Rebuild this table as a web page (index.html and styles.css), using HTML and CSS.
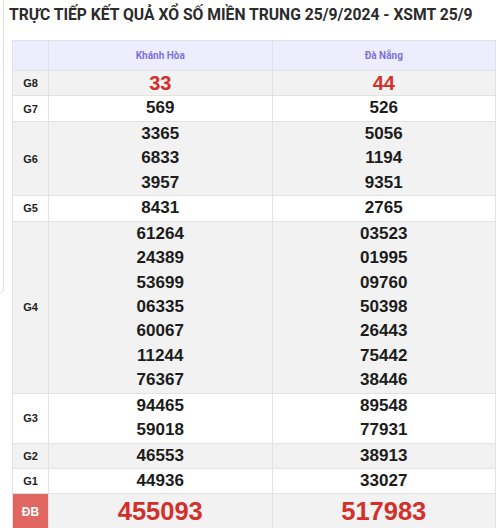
FILE: index.html
```html
<!DOCTYPE html>
<html lang="vi">
<head>
<meta charset="utf-8">
<title>XSMT 25/9</title>
<link rel="stylesheet" href="styles.css">
</head>
<body>
<div class="edge"></div>
<h1 class="title">TRỰC TIẾP KẾT QUẢ XỔ SỐ MIỀN TRUNG 25/9/2024 - XSMT 25/9</h1>
<table class="kq">
  <thead>
    <tr class="head">
      <th class="lbl"></th>
      <th>Khánh Hòa</th>
      <th>Đà Nẵng</th>
    </tr>
  </thead>
  <tbody>
    <tr class="odd">
      <td class="lbl">G8</td>
      <td class="num red g8"><div>33</div></td>
      <td class="num red g8"><div>44</div></td>
    </tr>
    <tr>
      <td class="lbl">G7</td>
      <td class="num"><div>569</div></td>
      <td class="num"><div>526</div></td>
    </tr>
    <tr class="odd">
      <td class="lbl">G6</td>
      <td class="num"><div>3365</div><div>6833</div><div>3957</div></td>
      <td class="num"><div>5056</div><div>1194</div><div>9351</div></td>
    </tr>
    <tr>
      <td class="lbl">G5</td>
      <td class="num"><div>8431</div></td>
      <td class="num"><div>2765</div></td>
    </tr>
    <tr class="odd">
      <td class="lbl">G4</td>
      <td class="num"><div>61264</div><div>24389</div><div>53699</div><div>06335</div><div>60067</div><div>11244</div><div>76367</div></td>
      <td class="num"><div>03523</div><div>01995</div><div>09760</div><div>50398</div><div>26443</div><div>75442</div><div>38446</div></td>
    </tr>
    <tr>
      <td class="lbl">G3</td>
      <td class="num"><div>94465</div><div>59018</div></td>
      <td class="num"><div>89548</div><div>77931</div></td>
    </tr>
    <tr class="odd">
      <td class="lbl">G2</td>
      <td class="num"><div>46553</div></td>
      <td class="num"><div>38913</div></td>
    </tr>
    <tr>
      <td class="lbl">G1</td>
      <td class="num"><div>44936</div></td>
      <td class="num"><div>33027</div></td>
    </tr>
    <tr class="odd db">
      <td class="lbl dblbl">ĐB</td>
      <td class="num red big"><div>455093</div></td>
      <td class="num red big"><div>517983</div></td>
    </tr>
  </tbody>
</table>
</body>
</html>
```
FILE: styles.css
```css
html, body {
  margin: 0;
  padding: 0;
  background: #ffffff;
}
body {
  position: relative;
  width: 500px;
  height: 528px;
  overflow: hidden;
  font-family: "Liberation Sans", Arial, sans-serif;
}
.edge {
  position: absolute;
  left: -20px;
  top: -10px;
  width: 22px;
  height: 302px;
  border: 1px solid #dcdcdc;
  border-radius: 5px;
}
.title {
  margin: 0;
  padding: 5px 0 0 9px;
  height: 35px;
  box-sizing: border-box;
  font-family: Roboto, "Liberation Sans", sans-serif;
  font-weight: 700;
  font-size: 15.7px;
  line-height: 19px;
  color: #2b2b2b;
  white-space: nowrap;
}
.kq {
  margin: 5px 0 0 12px;
  width: 484px;
  border-collapse: collapse;
  table-layout: fixed;
}
.kq th, .kq td {
  border: 1px solid #e2e2e2;
  padding: 0;
  text-align: center;
  vertical-align: middle;
}
.kq .lbl {
  width: 35px;
}
.head th {
  height: 29px;
  background: #eeedfd;
  color: #7d72dc;
  font-family: Roboto, "Liberation Sans", sans-serif;
  font-weight: 700;
  font-size: 10px;
}
.kq tr.odd td {
  background: #f2f2f2;
}
td.lbl {
  font-family: "Liberation Sans", Arial, sans-serif;
  font-weight: 700;
  font-size: 11px;
  color: #1e1e1e;
}
td.num {
  font-weight: 700;
  font-size: 17px;
  color: #1c1c1c;
}
td.num div {
  line-height: 24.45px;
  height: 24.45px;
}
td.red {
  color: #d3302b;
}
td.g8 {
  font-size: 20px;
}
td.big {
  font-size: 25.5px;
}
td.big div {
  height: 35px;
  line-height: 35px;
}
.kq tr.db td.dblbl {
  background: #dd5652;
  color: #ffffff;
  font-size: 12px;
  opacity: 0.9;
}
```
